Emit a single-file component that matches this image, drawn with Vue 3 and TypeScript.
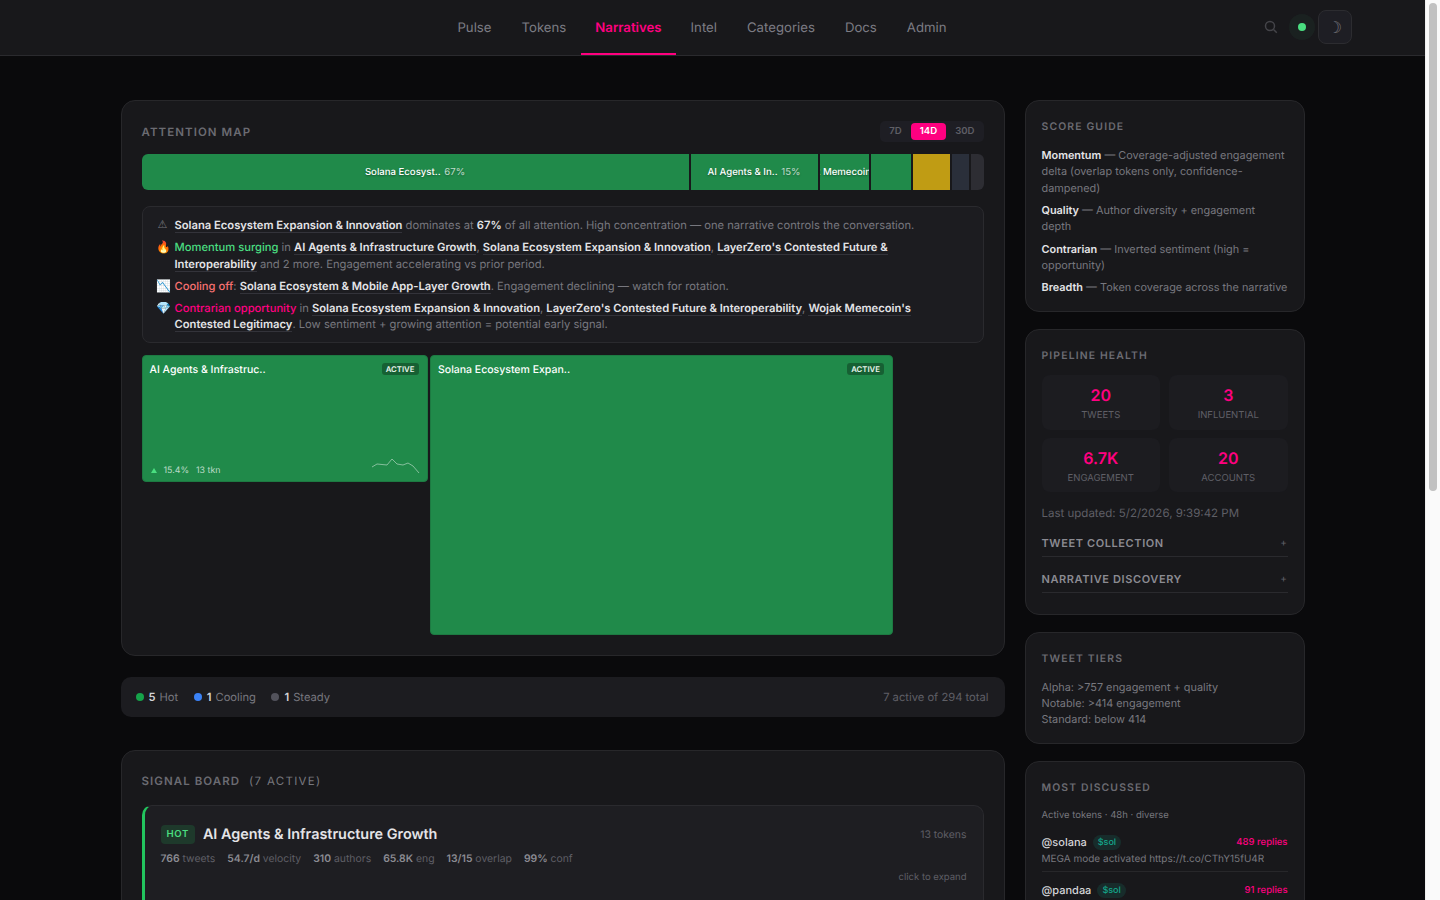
<script setup lang="ts">
const navItems = ['Pulse', 'Tokens', 'Narratives', 'Intel', 'Categories', 'Docs', 'Admin'];

const segments = [
  { w: 547, bg: '#208a4a', label: 'Solana Ecosyst..', pct: '67%' },
  { w: 127, bg: '#208a4a', label: 'AI Agents & In..', pct: '15%' },
  { w: 49, bg: '#208a4a', label: 'Wojak Memecoin..', pct: '6%' },
  { w: 40, bg: '#208a4a', label: '', pct: '' },
  { w: 37, bg: '#c09c14', label: '', pct: '' },
  { w: 17, bg: '#2a2f3a', label: '', pct: '' },
  { w: 13, bg: '#2d2d33', label: '', pct: '' },
];

const stats = [
  { value: '20', label: 'Tweets' },
  { value: '3', label: 'Influential' },
  { value: '6.7K', label: 'Engagement' },
  { value: '20', label: 'Accounts' },
];

const guide = [
  { name: 'Momentum', text: 'Coverage-adjusted engagement delta (overlap tokens only, confidence-dampened)' },
  { name: 'Quality', text: 'Author diversity + engagement depth' },
  { name: 'Contrarian', text: 'Inverted sentiment (high = opportunity)' },
  { name: 'Breadth', text: 'Token coverage across the narrative' },
];

const discussed = [
  { user: '@solana', tag: '$sol', replies: 489, text: 'MEGA mode activated https://t.co/CThY15fU4R' },
  { user: '@pandaa', tag: '$sol', replies: 91, text: 'Solana builders keep shipping this week' },
  { user: '@wojak', tag: '$wojak', replies: 64, text: 'The meme is not over yet' },
  { user: '@layerzero', tag: '$zro', replies: 42, text: 'Interoperability update for the network' },
];

const signals = [
  { state: 'HOT', cls: 'hot', name: 'AI Agents & Infrastructure Growth', tokens: 13, tweets: 766, vel: '54.7/d', authors: 310, eng: '65.8K', overlap: '13/15', conf: '99%' },
  { state: 'HOT', cls: 'hot', name: 'Solana Ecosystem Expansion & Innovation', tokens: 15, tweets: 3412, vel: '243.7/d', authors: 1204, eng: '288K', overlap: '14/15', conf: '99%' },
  { state: 'HOT', cls: 'hot', name: "LayerZero's Contested Future & Interoperability", tokens: 4, tweets: 212, vel: '15.1/d', authors: 96, eng: '18.4K', overlap: '3/4', conf: '87%' },
  { state: 'HOT', cls: 'hot', name: "Wojak Memecoin's Contested Legitimacy", tokens: 2, tweets: 301, vel: '21.5/d', authors: 144, eng: '22.9K', overlap: '2/2', conf: '91%' },
  { state: 'COOLING', cls: 'cool', name: 'Solana Ecosystem & Mobile App-Layer Growth', tokens: 6, tweets: 188, vel: '13.4/d', authors: 77, eng: '9.2K', overlap: '5/6', conf: '82%' },
];

const sparkline = '2,8 7,5 17,6 22,0 27,5 33,6 38,4 43,7 49,14';
</script>

<template>
  <div class="page">
    <header class="topbar">
      <nav class="nav">
        <a v-for="item in navItems" :key="item" class="nav-link" :class="{ active: item === 'Narratives' }">{{ item }}</a>
      </nav>
      <div class="nav-tools">
        <svg class="search" width="14" height="14" viewBox="0 0 14 14" fill="none">
          <circle cx="6" cy="6" r="4.5" stroke="#444449" stroke-width="1.5" />
          <path d="M9.5 9.5L12.8 12.8" stroke="#444449" stroke-width="1.5" />
        </svg>
        <span class="live"><i></i></span>
        <button class="theme">☽</button>
      </div>
    </header>

    <main class="layout">
      <div class="main-col">
        <section class="card attention">
          <div class="card-head">
            <h2 class="title">ATTENTION MAP</h2>
            <div class="range">
              <span>7D</span>
              <span class="on">14D</span>
              <span>30D</span>
            </div>
          </div>

          <div class="bar">
            <div
              v-for="(s, i) in segments"
              :key="i"
              class="seg"
              :style="{ flexGrow: s.w, flexBasis: 0, background: s.bg }"
            >
              <span v-if="s.label" class="seg-text"><b>{{ s.label }}</b> <em>{{ s.pct }}</em></span>
            </div>
          </div>

          <div class="insights">
            <div class="insight">
              <span class="ico warn">⚠</span>
              <p><u>Solana Ecosystem Expansion &amp; Innovation</u> dominates at <strong>67%</strong> of all attention. High concentration — one narrative controls the conversation.</p>
            </div>
            <div class="insight">
              <span class="ico">🔥</span>
              <p><span class="green">Momentum surging</span> in <u>AI Agents &amp; Infrastructure Growth</u>, <u>Solana Ecosystem Expansion &amp; Innovation</u>, <u>LayerZero's Contested Future &amp; Interoperability</u> and 2 more. Engagement accelerating vs prior period.</p>
            </div>
            <div class="insight">
              <span class="ico">📉</span>
              <p><span class="red">Cooling off</span>: <u>Solana Ecosystem &amp; Mobile App-Layer Growth</u>. Engagement declining — watch for rotation.</p>
            </div>
            <div class="insight">
              <span class="ico">💎</span>
              <p><span class="pink">Contrarian opportunity</span> in <u>Solana Ecosystem Expansion &amp; Innovation</u>, <u>LayerZero's Contested Future &amp; Interoperability</u>, <u>Wojak Memecoin's Contested Legitimacy</u>. Low sentiment + growing attention = potential early signal.</p>
            </div>
          </div>

          <div class="treemap">
            <div class="tile small">
              <div class="tile-top">
                <span class="tile-name">AI Agents &amp; Infrastruc..</span>
                <span class="tile-tag">ACTIVE</span>
              </div>
              <div class="tile-foot">
                <span class="tri"></span>
                <span>15.4%</span>
                <span>13 tkn</span>
                <svg class="spark" width="50" height="16" viewBox="0 0 50 16" fill="none">
                  <polyline :points="sparkline" stroke="rgba(255,255,255,.45)" stroke-width="1" />
                </svg>
              </div>
            </div>
            <div class="tile large">
              <div class="tile-top">
                <span class="tile-name">Solana Ecosystem Expan..</span>
                <span class="tile-tag">ACTIVE</span>
              </div>
            </div>
          </div>
        </section>

        <div class="status">
          <span class="st"><i class="d-green"></i><b>5</b> Hot</span>
          <span class="st"><i class="d-blue"></i><b>1</b> Cooling</span>
          <span class="st"><i class="d-gray"></i><b>1</b> Steady</span>
          <span class="total">7 active of 294 total</span>
        </div>

        <section class="card board">
          <h2 class="title board-title">SIGNAL BOARD <span>(7 ACTIVE)</span></h2>
          <article v-for="s in signals" :key="s.name" class="signal" :class="s.cls">
            <div class="signal-head">
              <span class="badge">{{ s.state }}</span>
              <h3>{{ s.name }}</h3>
              <span class="tokens">{{ s.tokens }} tokens</span>
            </div>
            <div class="signal-stats">
              <span><b>{{ s.tweets }}</b> tweets</span>
              <span><b>{{ s.vel }}</b> velocity</span>
              <span><b>{{ s.authors }}</b> authors</span>
              <span><b>{{ s.eng }}</b> eng</span>
              <span><b>{{ s.overlap }}</b> overlap</span>
              <span><b>{{ s.conf }}</b> conf</span>
            </div>
            <div class="expand">click to expand</div>
          </article>
        </section>
      </div>

      <aside class="side-col">
        <section class="card side">
          <h2 class="title">SCORE GUIDE</h2>
          <p v-for="g in guide" :key="g.name" class="guide"><strong>{{ g.name }}</strong> — {{ g.text }}</p>
        </section>

        <section class="card side">
          <h2 class="title">PIPELINE HEALTH</h2>
          <div class="stats">
            <div v-for="s in stats" :key="s.label" class="stat">
              <div class="stat-val">{{ s.value }}</div>
              <div class="stat-label">{{ s.label }}</div>
            </div>
          </div>
          <div class="updated">Last updated: 5/2/2026, 9:39:42 PM</div>
          <div class="acc"><span>TWEET COLLECTION</span><em>+</em></div>
          <div class="acc"><span>NARRATIVE DISCOVERY</span><em>+</em></div>
        </section>

        <section class="card side">
          <h2 class="title">TWEET TIERS</h2>
          <div class="tiers">
            <div>Alpha: &gt;757 engagement + quality</div>
            <div>Notable: &gt;414 engagement</div>
            <div>Standard: below 414</div>
          </div>
        </section>

        <section class="card side">
          <h2 class="title">MOST DISCUSSED</h2>
          <div class="sub">Active tokens · 48h · diverse</div>
          <div v-for="d in discussed" :key="d.user" class="talk">
            <div class="talk-top">
              <span class="user">{{ d.user }}</span>
              <span class="tag">{{ d.tag }}</span>
              <span class="replies">{{ d.replies }} replies</span>
            </div>
            <div class="talk-text">{{ d.text }}</div>
          </div>
        </section>
      </aside>
    </main>

    <div class="scrollbar"><div class="thumb"></div></div>
  </div>
</template>

<style>
body {
  background: #0a0a0c;
}
</style>

<style scoped>
.page {
  box-sizing: border-box;
  min-height: 1650px;
  padding-right: 15px;
  background: #0a0a0c;
  color: #e4e4e7;
  font-family: Inter, "Liberation Sans", sans-serif;
  text-rendering: geometricPrecision;
}
.scrollbar {
  position: fixed;
  top: 0;
  right: 0;
  bottom: 0;
  width: 15px;
  background: #fafafa;
  border-left: 1px solid #efefef;
  box-sizing: border-box;
}
.thumb {
  width: 8px;
  height: 488px;
  margin: 3px 0 0 3px;
  background: #c1c1c1;
  border-radius: 4px;
}
.topbar {
  position: relative;
  height: 55px;
  display: flex;
  justify-content: center;
  background: #18181b;
  border-bottom: 1px solid #2a2a2e;
}
.nav {
  display: flex;
  margin-left: -21px;
}
.nav-link {
  display: flex;
  align-items: center;
  height: 55px;
  box-sizing: border-box;
  padding: 2px 15px 0;
  font-size: 13.2px;
  color: #7c7c84;
  border-bottom: 2px solid transparent;
}
.nav-link.active {
  padding: 2px 14px 0;
  color: #ff0080;
  font-weight: 600;
  border-bottom-color: #ff0080;
}
.nav-tools {
  position: absolute;
  top: 10px;
  right: 73px;
  display: flex;
  align-items: center;
  gap: 9px;
}
.search {
  margin-right: 2px;
}
.live {
  width: 26px;
  height: 26px;
  border-radius: 50%;
  display: flex;
  align-items: center;
  justify-content: center;
  background: rgba(74, 222, 128, 0.05);
}
.live i {
  width: 8px;
  height: 8px;
  border-radius: 50%;
  background: #4ade80;
}
.theme {
  width: 34px;
  height: 34px;
  margin-left: -6px;
  padding: 0;
  background: #1e1e24;
  border: 1px solid #2c2c30;
  border-radius: 8px;
  color: #77777d;
  font-size: 16px;
  font-family: "DejaVu Sans", sans-serif;
}
.layout {
  box-sizing: border-box;
  max-width: 1280px;
  margin: 0 auto;
  padding: 44px 48px 40px;
  display: grid;
  grid-template-columns: 1fr 280px;
  gap: 20px;
  align-items: start;
}
.main-col {
  display: flex;
  flex-direction: column;
  min-width: 0;
}
.side-col {
  display: flex;
  flex-direction: column;
  gap: 17px;
}
.card {
  background: #18181b;
  border: 1px solid #27272a;
  border-radius: 14px;
}
.title {
  margin: 0;
  font-size: 11.5px;
  line-height: 16px;
  font-weight: 600;
  letter-spacing: 1.06px;
  color: #6b6b72;
}
.side .title {
  padding-top: 1px;
  margin-bottom: -1px;
  font-size: 10.4px;
  letter-spacing: 1.14px;
}
.attention {
  padding: 20px;
}
.card-head {
  display: flex;
  justify-content: space-between;
  align-items: center;
  height: 21px;
  margin-bottom: 12px;
}
.range {
  display: flex;
  align-items: center;
  gap: 1px;
  height: 21px;
  padding: 0 0.5px 0 1px;
  background: #1e1e24;
  border-radius: 5px;
  font-size: 9.6px;
  font-weight: 600;
  color: #5f5f66;
}
.range span {
  padding: 0 8.5px;
  line-height: 17px;
  border-radius: 4px;
}
.range .on {
  background: #ff0080;
  color: #fff;
}
.bar {
  display: flex;
  gap: 2px;
  height: 36px;
  border-radius: 6px;
  overflow: hidden;
}
.seg {
  min-width: 0;
  display: flex;
  align-items: center;
  justify-content: center;
  overflow: hidden;
  white-space: nowrap;
}
.seg-text {
  flex: none;
  font-size: 9.6px;
  color: #fff;
  text-shadow: 0 1px 2px rgba(0, 0, 0, 0.4);
}
.seg-text b {
  font-weight: 500;
}
.seg-text em {
  font-style: normal;
  opacity: 0.7;
  margin-left: 1px;
}
.insights {
  margin-top: 16px;
  padding: 10px 14px 9px;
  background: #1c1c20;
  border: 1px solid #2a2a2e;
  border-radius: 8px;
  display: flex;
  flex-direction: column;
  gap: 5.25px;
}
.insight {
  display: flex;
  gap: 6px;
  font-size: 11.2px;
  line-height: 16.8px;
  color: #77777e;
}
.insight:last-child {
  line-height: 16.3px;
}
.insight p {
  margin: 0;
  max-width: 760px;
}
.ico {
  flex: none;
  width: 12px;
  font-size: 12px;
  text-align: center;
}
.warn {
  color: #77777e;
  font-family: "DejaVu Sans", sans-serif;
  font-size: 11px;
}
.insight u {
  color: #e4e4e7;
  font-weight: 600;
  text-decoration: none;
  border-bottom: 1px solid #33333a;
}
.insight strong {
  color: #e4e4e7;
  font-weight: 600;
}
.green {
  color: #4ade80;
  font-weight: 500;
}
.red {
  color: #f87171;
  font-weight: 500;
}
.pink {
  color: #ff0080;
  font-weight: 500;
}
.treemap {
  display: flex;
  align-items: flex-start;
  gap: 2.5px;
  height: 280px;
  margin-top: 12px;
}
.tile {
  box-sizing: border-box;
  display: flex;
  flex-direction: column;
  justify-content: space-between;
  padding: 7px 8px 5px 7px;
  background: #208a4a;
  border: 1px solid #1d7a42;
  border-radius: 4px;
}
.small {
  width: 286px;
  height: 127px;
}
.large {
  width: 463px;
  height: 280px;
}
.tile-top {
  display: flex;
  justify-content: space-between;
  align-items: center;
  height: 12px;
}
.tile-name {
  margin-top: 2px;
  font-size: 10.5px;
  font-weight: 500;
  color: #fff;
}
.tile-tag {
  padding: 1px 4px;
  font-size: 7.8px;
  font-weight: 600;
  line-height: 10px;
  color: #e8f5ec;
  background: rgba(0, 0, 0, 0.3);
  border-radius: 3px;
}
.tile-foot {
  display: flex;
  align-items: flex-end;
  gap: 7px;
  font-size: 8.8px;
  line-height: 10px;
  color: rgba(255, 255, 255, 0.7);
}
.tri {
  width: 0;
  height: 0;
  margin: 0 0 3px 1px;
  border-left: 3px solid transparent;
  border-right: 3px solid transparent;
  border-bottom: 5px solid #4ade80;
}
.spark {
  margin-left: auto;
  margin-right: -1px;
  margin-bottom: 1px;
}
.status {
  display: flex;
  align-items: center;
  gap: 15.5px;
  height: 40px;
  margin-top: 21px;
  padding: 0 16px 0 15px;
  background: #1c1c20;
  border-radius: 10px;
  font-size: 11.2px;
  color: #77777e;
}
.st {
  display: flex;
  align-items: center;
}
.st i {
  width: 8px;
  height: 8px;
  margin-right: 5px;
  border-radius: 50%;
}
.st b {
  margin-right: 4px;
  font-weight: 600;
  color: #d4d4d8;
}
.d-green {
  background: #16a34a;
}
.d-blue {
  background: #3b82f6;
}
.d-gray {
  background: #52525b;
}
.total {
  margin-left: auto;
  color: #5f5f66;
}
.board {
  margin-top: 33px;
  padding: 22px 20px 20px;
}
.board-title {
  margin-bottom: 16px;
}
.board-title span {
  margin-left: 5px;
  font-weight: 400;
  letter-spacing: 1.3px;
  color: #77777e;
}
.signal {
  box-sizing: border-box;
  height: 110px;
  margin-bottom: 10px;
  padding: 19px 16px 0 16px;
  background: #1e1e22;
  border: 1px solid #2a2a2e;
  border-left: 3px solid #22c55e;
  border-radius: 10px;
}
.signal.cool {
  border-left-color: #3b82f6;
}
.signal-head {
  display: flex;
  align-items: center;
  gap: 8px;
}
.badge {
  padding: 0 6px;
  line-height: 19px;
  font-size: 9.6px;
  font-weight: 600;
  letter-spacing: 0.6px;
  color: #4ade80;
  background: rgba(34, 197, 94, 0.16);
  border-radius: 4px;
}
.cool .badge {
  color: #60a5fa;
  background: rgba(59, 130, 246, 0.16);
}
.signal-head h3 {
  margin: 0;
  font-size: 14.4px;
  font-weight: 600;
  color: #e4e4e7;
}
.tokens {
  margin-left: auto;
  font-size: 10.4px;
  color: #5f5f66;
}
.signal-stats {
  display: flex;
  gap: 12px;
  margin-top: 8px;
  font-size: 10.4px;
  color: #5f5f66;
}
.signal-stats b {
  font-weight: 600;
  color: #8b8b92;
}
.expand {
  margin-top: 7px;
  text-align: right;
  font-size: 9.5px;
  color: #5f5f66;
}
.side {
  padding: 17px 16px 15px;
}
.guide {
  margin: 0 0 6px;
  font-size: 10.88px;
  line-height: 16.32px;
  color: #77777e;
}
.side .title + .guide {
  margin-top: 13px;
}
.guide:last-child {
  margin-bottom: 0;
}
.guide strong {
  font-weight: 600;
  color: #e4e4e7;
}
.stats {
  display: grid;
  grid-template-columns: 1fr 1fr;
  gap: 8px 9px;
  margin-top: 12.5px;
}
.stat {
  height: 54.6px;
  padding-top: 10px;
  box-sizing: border-box;
  text-align: center;
  background: #1c1c20;
  border-radius: 8px;
}
.stat-val {
  font-size: 16px;
  line-height: 20px;
  font-weight: 600;
  color: #ff0080;
}
.stat-label {
  margin-top: 5px;
  font-size: 9.5px;
  line-height: 12px;
  text-transform: uppercase;
  color: #5f5f66;
}
.updated {
  margin-top: 13px;
  font-size: 11.5px;
  line-height: 16px;
  color: #5f5f66;
}
.acc {
  display: flex;
  justify-content: space-between;
  align-items: center;
  height: 36px;
  box-sizing: border-box;
  padding-top: 8px;
  border-bottom: 1px solid #2a2a2e;
  font-size: 11px;
  font-weight: 600;
  letter-spacing: 0.6px;
  color: #8b8b92;
}
.acc em {
  font-style: normal;
  font-weight: 400;
  font-size: 10px;
  color: #5f5f66;
}
.acc + .acc {
  height: 36px;
  margin-bottom: 6px;
}
.tiers {
  margin-top: 13px;
  margin-bottom: 1px;
  font-size: 10.88px;
  line-height: 16px;
  color: #77777e;
}
.sub {
  margin-top: 14px;
  margin-bottom: 11px;
  font-size: 9.5px;
  line-height: 14px;
  color: #77777e;
}
.talk {
  padding-bottom: 5px;
  margin-bottom: 10px;
  border-bottom: 1px solid #27272a;
}
.talk:last-child {
  border-bottom: 0;
  margin-bottom: 0;
}
.talk-top {
  display: flex;
  align-items: center;
  gap: 6px;
  height: 16px;
}
.user {
  font-size: 11px;
  font-weight: 500;
  color: #d4d4d8;
}
.tag {
  padding: 0 5px;
  line-height: 15px;
  font-size: 9px;
  font-weight: 500;
  color: #14a88c;
  background: rgba(20, 168, 140, 0.14);
  border-radius: 8px;
}
.replies {
  margin-left: auto;
  font-size: 9.5px;
  font-weight: 500;
  color: #ff0080;
}
.talk-text {
  margin-top: 2px;
  font-size: 10px;
  line-height: 14px;
  color: #77777e;
}
</style>
